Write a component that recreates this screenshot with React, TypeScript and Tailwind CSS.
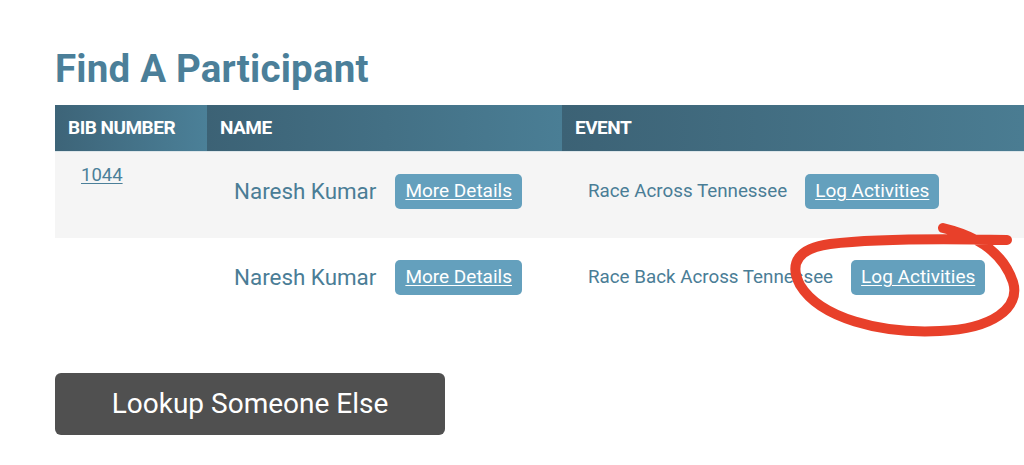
const rows = [
  { bib: '1044', name: 'Naresh Kumar', event: 'Race Across Tennessee' },
  { bib: '', name: 'Naresh Kumar', event: 'Race Back Across Tennessee' },
]

export default function App() {
  return (
    <div className="relative min-h-[465px] overflow-hidden bg-white font-['Roboto',sans-serif]">
      <div className="pl-[55px] pt-[46px]">
        <h1 className="text-[38.5px] leading-[46px] font-bold text-[#4b7f99] tracking-[0.2px]">
          Find A Participant
        </h1>

        <div className="mt-[13px] w-[1000px]">
          <div className="flex h-[47px] border-b border-[#dde6ea] text-white font-bold text-[19px] uppercase tracking-[-0.5px]">
            <div className="w-[152px] flex items-center pl-[13px] bg-linear-to-r from-[#3d6478] to-[#4b8098]">
              Bib Number
            </div>
            <div className="w-[355px] flex items-center pl-[13px] bg-linear-to-r from-[#3c6275] to-[#4a7e95]">
              Name
            </div>
            <div className="flex-1 flex items-center pl-[13px] bg-linear-to-r from-[#3c6275] to-[#4b7e94]">
              Event
            </div>
          </div>

          {rows.map((r, i) => (
            <Row key={i} {...r} striped={i === 0} />
          ))}
        </div>

        <button className="mt-[49px] w-[390px] h-[62px] rounded-[6px] bg-[#505050] text-white text-[28px]">
          Lookup Someone Else
        </button>
      </div>

      <svg
        className="absolute left-0 top-0 pointer-events-none"
        width="1024"
        height="465"
        viewBox="0 0 1024 465"
      >
        <path
          d="M 943 228 C 977 236, 1003 252, 1013 282 C 1021 308, 992 329, 940 331 C 880 334, 820 318, 800 285 C 788 262, 800 248, 830 244 C 880 238, 960 239, 1007 240"
          fill="none"
          stroke="#e8402a"
          strokeWidth="10"
          strokeLinecap="round"
        />
      </svg>
    </div>
  )
}

function Row({ bib, name, event, striped }: { bib: string; name: string; event: string; striped: boolean }) {
  return (
    <div className={`flex h-[86px] ${striped ? 'bg-[#f5f5f5]' : 'bg-white'}`}>
      <div className="w-[152px] pl-[26px] pt-[10px]">
        {bib && (
          <a href="#" className="text-[18.5px] text-[#4b7f99] underline underline-offset-2">
            {bib}
          </a>
        )}
      </div>
      <div className="w-[355px] pl-[27px] pt-[22px] flex items-start gap-[19px]">
        <div className="h-[35px] flex items-center text-[22.4px] text-[#4a7d96]">{name}</div>
        <ActionButton label="More Details" />
      </div>
      <div className="flex-1 pl-[26px] pt-[22px] flex items-start gap-[18px]">
        <div className="h-[35px] flex items-center text-[18.8px] text-[#4a7d96]">{event}</div>
        <ActionButton label="Log Activities" />
      </div>
    </div>
  )
}

function ActionButton({ label }: { label: string }) {
  return (
    <a
      href="#"
      className="inline-flex items-center h-[35px] px-[10px] rounded-[5px] bg-[#64a0bd] text-white text-[19px] underline underline-offset-2"
    >
      {label}
    </a>
  )
}
